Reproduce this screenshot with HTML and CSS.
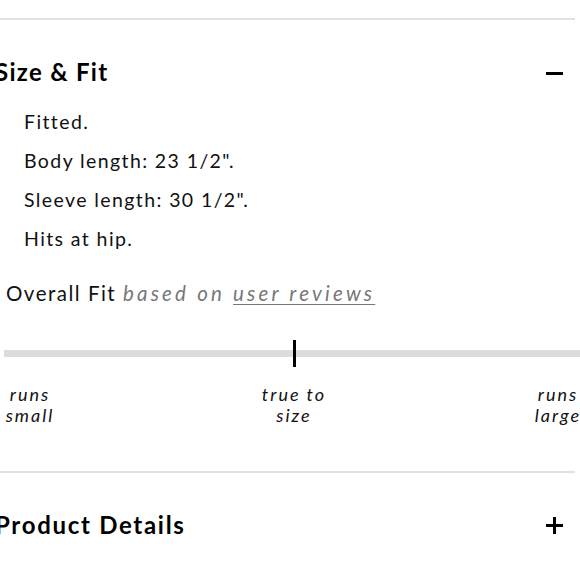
FILE: index.html
```html
<!DOCTYPE html>
<html lang="en">
<head>
<meta charset="utf-8">
<title>Size &amp; Fit</title>
<link rel="stylesheet" href="styles.css">
</head>
<body>
<div class="accordion">
  <section class="section open">
    <div class="section-header">
      <h2 class="section-title">Size &amp; Fit</h2>
      <span class="toggle minus" aria-hidden="true"></span>
    </div>
    <ul class="fit-list">
      <li>Fitted.</li>
      <li>Body length: 23 1/2".</li>
      <li>Sleeve length: 30 1/2".</li>
      <li>Hits at hip.</li>
    </ul>
    <div class="overall">
      Overall Fit <span class="based">based on <a class="reviews" href="#">user reviews</a></span>
    </div>
    <div class="scale">
      <div class="track"><span class="marker"></span></div>
      <div class="labels">
        <span class="label">runs<br>small</span>
        <span class="label">true to<br>size</span>
        <span class="label">runs<br>large</span>
      </div>
    </div>
  </section>
  <section class="section">
    <div class="section-header">
      <h2 class="section-title wide">Product Details</h2>
      <span class="toggle plus" aria-hidden="true"></span>
    </div>
  </section>
</div>
</body>
</html>
```
FILE: styles.css
```css
html, body {
  margin: 0;
  padding: 0;
  background: #fff;
}
body {
  font-family: Lato, "Open Sans", sans-serif;
  color: #111;
  overflow: hidden;
}
.accordion {
  margin-left: -5px;
  width: 580px;
  padding-top: 18px;
}
.section {
  border-top: 2px solid #e1e1e1;
}
.section-header {
  display: flex;
  align-items: center;
  justify-content: space-between;
  height: 104px;
  padding-right: 12px;
}
.open .section-header {
  height: 100px;
  align-items: flex-start;
  padding-top: 38px;
  box-sizing: border-box;
}
.section-title {
  margin: 0;
  font-size: 24px;
  font-weight: 700;
  line-height: 28px;
  letter-spacing: 1.3px;
  color: #000;
}
.section-title.wide {
  letter-spacing: 1.7px;
}
.toggle {
  position: relative;
  width: 17px;
  height: 17px;
  display: block;
}
.open .toggle { margin-top: 7px; }
.toggle::before,
.toggle::after {
  content: "";
  position: absolute;
  background: #000;
}
.toggle::before {
  left: 0; right: 0;
  top: 7px; height: 3px;
}
.plus::after {
  top: 0; bottom: 0;
  left: 7px; width: 3px;
}
.fit-list {
  list-style: none;
  margin: -18px 0 0;
  padding: 0 0 0 29px;
  font-size: 19.5px;
  line-height: 39px;
  letter-spacing: 1.4px;
}
.overall {
  padding-left: 11px;
  margin-top: 21px;
  font-size: 20.5px;
  line-height: 28px;
  letter-spacing: 1.5px;
}
.based {
  font-style: italic;
  color: #777;
  letter-spacing: 3.2px;
}
.reviews {
  color: #777;
  text-decoration: underline;
  text-decoration-thickness: 1px;
  text-underline-offset: 3px;
}
.scale {
  margin-left: 9px;
  width: 580px;
  margin-top: 43px;
}
.track {
  position: relative;
  height: 7px;
  background: #dcdcdc;
}
.marker {
  position: absolute;
  left: 289px;
  top: -10px;
  width: 3px;
  height: 27px;
  background: #000;
}
.labels {
  display: flex;
  justify-content: space-between;
  margin-top: 27px;
  padding-bottom: 45px;
}
.label {
  font-style: italic;
  font-size: 18px;
  line-height: 21px;
  letter-spacing: 2px;
  text-align: center;
  width: 52px;
}
.label:nth-child(2) { width: 66px; }
```
